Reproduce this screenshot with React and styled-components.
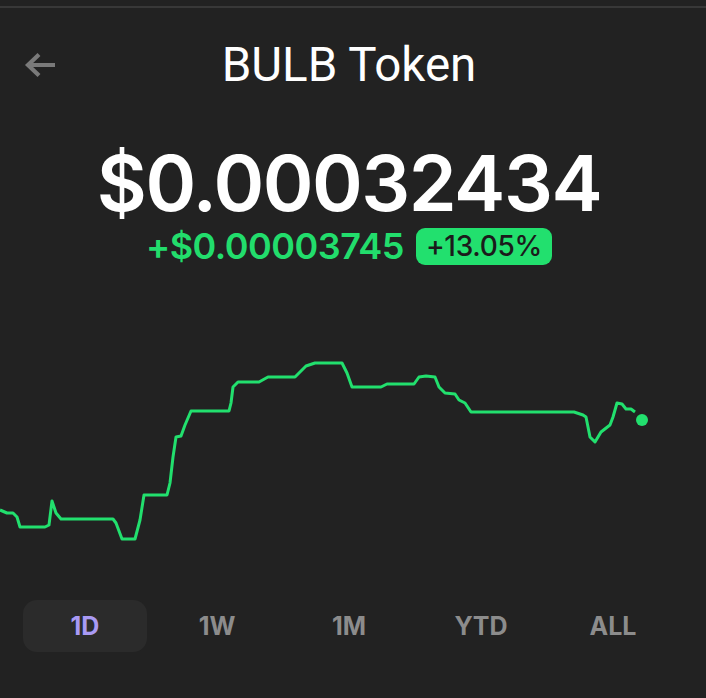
import React, { useState } from "react";
import styled, { createGlobalStyle } from "styled-components";

const GlobalStyle = createGlobalStyle`
  html, body {
    margin: 0;
    padding: 0;
    background: #222222;
  }
  body {
    font-family: Inter, "Noto Sans", sans-serif;
    color: #ffffff;
  }
`;

const Page = styled.div`
  width: 706px;
  height: 698px;
  overflow: hidden;
  background: #222222;
`;

const TopRule = styled.div`
  margin-top: 6px;
  height: 2px;
  background: #383838;
`;

const Content = styled.div`
  padding-right: 8px;
  display: flex;
  flex-direction: column;
  align-items: center;
`;

const Header = styled.div`
  width: 100%;
  padding-top: 29px;
  display: grid;
  grid-template-columns: 1fr auto 1fr;
  align-items: center;
`;

const BackButton = styled.button`
  justify-self: start;
  margin-left: 24px;
  padding: 0;
  border: none;
  background: none;
  display: flex;
  cursor: pointer;
`;

const Title = styled.h1`
  margin: 0;
  font-family: Roboto, Inter, sans-serif;
  font-weight: 400;
  font-size: 47.5px;
  line-height: 56px;
  color: #ffffff;
`;

const Price = styled.div`
  margin-top: 53px;
  font-weight: 600;
  font-size: 77px;
  line-height: 74px;
  letter-spacing: -1.5px;
  color: #ffffff;
`;

const ChangeRow = styled.div`
  margin-top: 8px;
  display: flex;
  align-items: center;
  gap: 12px;
  height: 37px;
`;

const ChangeValue = styled.span`
  font-weight: 600;
  font-size: 36px;
  line-height: 37px;
  letter-spacing: -0.5px;
  color: #22dd6c;
`;

const Badge = styled.span`
  height: 37px;
  padding: 0 10px;
  border-radius: 9px;
  background: #22e06e;
  color: #1b1b1b;
  font-weight: 500;
  font-size: 28px;
  line-height: 37px;
  letter-spacing: -0.3px;
`;

const Chart = styled.svg`
  display: block;
  margin-top: 65px;
  width: 706px;
  height: 250px;
  align-self: flex-start;
`;

const Tabs = styled.div`
  width: 100%;
  margin-top: 20px;
  padding-left: 19px;
  box-sizing: border-box;
  display: grid;
  grid-template-columns: repeat(5, 132px);
`;

const Tab = styled.button`
  margin: 0 4px;
  height: 52px;
  border: none;
  border-radius: 14px;
  background: ${(p) => (p.$active ? "#2b2b2b" : "transparent")};
  color: ${(p) => (p.$active ? "#a99af4" : "#8c8c8c")};
  font-family: Inter, sans-serif;
  font-weight: 700;
  font-size: 25px;
  cursor: pointer;
`;

const points = [
  [0, 510], [7, 513], [13, 513], [17, 517], [20, 527], [45, 527], [49, 525],
  [52, 501], [56, 513], [61, 519], [113, 519], [116, 523], [122, 539],
  [135, 539], [140, 520], [144, 495], [167, 495], [170, 483], [173, 457],
  [176, 437], [181, 436], [185, 425], [191, 411], [229, 411], [231, 403],
  [233, 387], [238, 382], [259, 382], [268, 377], [295, 377], [300, 372],
  [306, 366], [315, 363], [342, 363], [347, 373], [352, 387], [381, 387],
  [387, 384], [414, 384], [419, 377], [426, 376], [435, 377], [439, 387],
  [445, 393], [455, 394], [459, 400], [465, 403], [471, 412], [574, 412],
  [583, 415], [586, 417], [590, 437], [595, 442], [601, 432], [610, 425],
  [613, 417], [617, 403], [622, 404], [626, 409], [631, 409], [635, 412],
];

const CHART_TOP = 330;
const linePath = points
  .map(([x, y], i) => `${i ? "L" : "M"}${x} ${y - CHART_TOP}`)
  .join(" ");

const ranges = ["1D", "1W", "1M", "YTD", "ALL"];

export default function App() {
  const [range, setRange] = useState("1D");
  return (
    <Page>
      <GlobalStyle />
      <TopRule />
      <Content>
        <Header>
          <BackButton aria-label="Back">
            <svg width="34" height="28" viewBox="0 0 34 28">
              <path
                d="M31 14 H5 M15 3.5 L4 14 L15 24.5"
                fill="none"
                stroke="#7a7a7a"
                strokeWidth="4.2"
              />
            </svg>
          </BackButton>
          <Title>BULB Token</Title>
          <span />
        </Header>
        <Price>$0.00032434</Price>
        <ChangeRow>
          <ChangeValue>+$0.00003745</ChangeValue>
          <Badge>+13.05%</Badge>
        </ChangeRow>
        <Chart viewBox="0 0 706 250">
          <path
            d={linePath}
            fill="none"
            stroke="#22e06e"
            strokeWidth="3"
            strokeLinejoin="round"
          />
          <circle cx="642" cy={420 - CHART_TOP} r="6" fill="#22e06e" />
        </Chart>
        <Tabs>
          {ranges.map((r) => (
            <Tab key={r} $active={r === range} onClick={() => setRange(r)}>
              {r}
            </Tab>
          ))}
        </Tabs>
      </Content>
    </Page>
  );
}
